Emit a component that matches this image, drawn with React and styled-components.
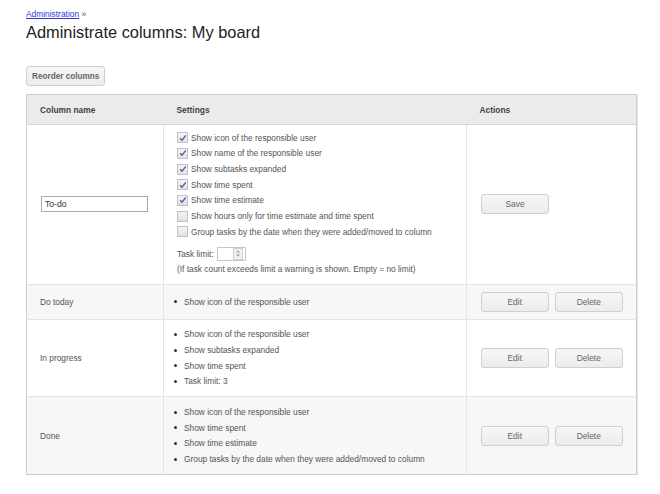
import React from 'react';
import styled, { createGlobalStyle } from 'styled-components';

const GlobalStyle = createGlobalStyle`
  body {
    margin: 0;
    background: #fff;
    font-family: "Liberation Sans", Arial, sans-serif;
  }
`

const Page = styled.div`
  padding: 8px 24px 0 26px;
  width: 610px;
`

const Breadcrumb = styled.div`
  font-size: 8.4px;
  line-height: 12px;
  color: #555;
  & a {
    color: #3333dd;
    text-decoration: underline;
  }
`

const Title = styled.h1`
  margin: 2px 0 0;
  font-size: 16.4px;
  font-weight: normal;
  color: #222;
  line-height: 20px;
`

const Button = styled.button`
  font-family: "Liberation Sans", Arial, sans-serif;
  font-size: ${p => (p.$bold ? '8.2px' : '8.4px')};
  font-weight: ${p => (p.$bold ? 'bold' : 'normal')};
  color: #666;
  background: linear-gradient(#f6f6f6, #ececec);
  border: 1px solid #cfcfcf;
  border-radius: 3px;
  height: 20px;
  width: ${p => p.$width || 'auto'};
  padding: 0 5px;
  cursor: pointer;
`

const Toolbar = styled.div`
  margin-top: 24px;
  margin-bottom: 8px;
  display: flex;
`

const Table = styled.table`
  width: 610px;
  table-layout: fixed;
  border-collapse: collapse;
  border: 1px solid #cccccc;
  box-shadow: 1px 1px 0 #e6e6e6;
  font-size: 8.35px;
  color: #555;
`

const Th = styled.th`
  background: #ebebeb;
  color: #444;
  font-weight: bold;
  font-size: 8.4px;
  text-align: left;
  height: 29px;
  padding: 0 13px;
  border-bottom: 1px solid #d6d6d6;
`

const Row = styled.tr`
  background: ${p => (p.$alt ? '#f7f7f7' : '#fff')};
  border-top: 1px solid #e4e4e4;
`

const Td = styled.td`
  padding: ${p => p.$pad || '7px 13px'};
  vertical-align: middle;
  border-left: 1px solid #e4e4e4;
  &:first-child { border-left: none; }
`

const NameInput = styled.input`
  font-family: "Liberation Sans", Arial, sans-serif;
  font-size: 8.6px;
  color: #333;
  width: 107px;
  height: 16px;
  box-sizing: border-box;
  border: 1px solid #aaa;
  padding: 0 3px;
  margin-left: 1px;
`

const CheckLine = styled.label`
  display: flex;
  align-items: center;
  height: 15.67px;
  gap: 3px;
  white-space: nowrap;
`

const Box = styled.span`
  width: 9px;
  height: 9px;
  border: 1px solid #c2c2c2;
  background: linear-gradient(#f4f4f4, #e2e2e2);
  display: inline-flex;
  align-items: center;
  justify-content: center;
  flex: none;
`

const LimitLine = styled.div`
  display: flex;
  align-items: center;
  margin-top: 7px;
  gap: 3px;
`

const Spinner = styled.span`
  width: 25px;
  height: 12px;
  border: 1px solid #c6c6c6;
  background: #fff;
  display: inline-flex;
  justify-content: flex-end;
  align-items: center;
  padding-right: 2px;
  flex: none;
`

const SpinArrows = styled.span`
  width: 8px;
  height: 10px;
  border: 1px solid #d2d2d2;
  background: #f0f0f0;
  display: flex;
  align-items: center;
  justify-content: center;
`

const Note = styled.div`
  margin-top: 2px;
  line-height: 12px;
  white-space: nowrap;
`

const List = styled.ul`
  margin: 0 0 0 -3px;
  padding: 0;
  list-style: none;
`

const Item = styled.li`
  height: 15.67px;
  display: flex;
  align-items: center;
  white-space: nowrap;
  &::before {
    content: '';
    width: 3px;
    height: 3px;
    border-radius: 50%;
    background: #333;
    margin-right: 7px;
  }
`

const Actions = styled.div`
  display: flex;
  gap: 6px;
  padding-left: 1px;
`

function Checkbox({ checked, children }) {
  return (
    <CheckLine>
      <Box>
        {checked && (
          <svg width="8" height="8" viewBox="0 0 8 8">
            <path d="M1.2 4.2 L3 6.2 L6.8 1.3" fill="none" stroke="#3a62a8" strokeWidth="1.3" />
          </svg>
        )}
      </Box>
      {children}
    </CheckLine>
  )
}

const options = [
  ['Show icon of the responsible user', true],
  ['Show name of the responsible user', true],
  ['Show subtasks expanded', true],
  ['Show time spent', true],
  ['Show time estimate', true],
  ['Show hours only for time estimate and time spent', false],
  ['Group tasks by the date when they were added/moved to column', false],
]

const columns = [
  { name: 'Do today', settings: ['Show icon of the responsible user'], alt: true },
  { name: 'In progress', settings: ['Show icon of the responsible user', 'Show subtasks expanded', 'Show time spent', 'Task limit: 3'] },
  { name: 'Done', settings: ['Show icon of the responsible user', 'Show time spent', 'Show time estimate', 'Group tasks by the date when they were added/moved to column'], alt: true },
]

export default function App() {
  return (
    <Page>
      <GlobalStyle />
      <Breadcrumb><a href="#">Administration</a> »</Breadcrumb>
      <Title>Administrate columns: My board</Title>
      <Toolbar><Button $bold>Reorder columns</Button></Toolbar>
      <Table>
        <colgroup>
          <col style={{ width: 137 }} />
          <col style={{ width: 303 }} />
          <col style={{ width: 170 }} />
        </colgroup>
        <thead>
          <tr>
            <Th>Column name</Th>
            <Th>Settings</Th>
            <Th>Actions</Th>
          </tr>
        </thead>
        <tbody>
          <Row>
            <Td><NameInput defaultValue="To-do" /></Td>
            <Td $pad="5px 13px 9px">
              {options.map(([label, checked]) => (
                <Checkbox key={label} checked={checked}>{label}</Checkbox>
              ))}
              <LimitLine>
                Task limit:
                <Spinner>
                  <SpinArrows>
                    <svg width="6" height="9" viewBox="0 0 6 9">
                      <path d="M1 3.5 L3 1.5 L5 3.5 Z M1 5.5 L3 7.5 L5 5.5 Z" fill="#8a9bb5" />
                    </svg>
                  </SpinArrows>
                </Spinner>
              </LimitLine>
              <Note>(If task count exceeds limit a warning is shown. Empty = no limit)</Note>
            </Td>
            <Td><Actions><Button $width="68px">Save</Button></Actions></Td>
          </Row>
          {columns.map(col => (
            <Row key={col.name} $alt={col.alt}>
              <Td>{col.name}</Td>
              <Td>
                <List>
                  {col.settings.map(s => <Item key={s}>{s}</Item>)}
                </List>
              </Td>
              <Td>
                <Actions>
                  <Button $width="68px">Edit</Button>
                  <Button $width="69px">Delete</Button>
                </Actions>
              </Td>
            </Row>
          ))}
        </tbody>
      </Table>
    </Page>
  )
}
